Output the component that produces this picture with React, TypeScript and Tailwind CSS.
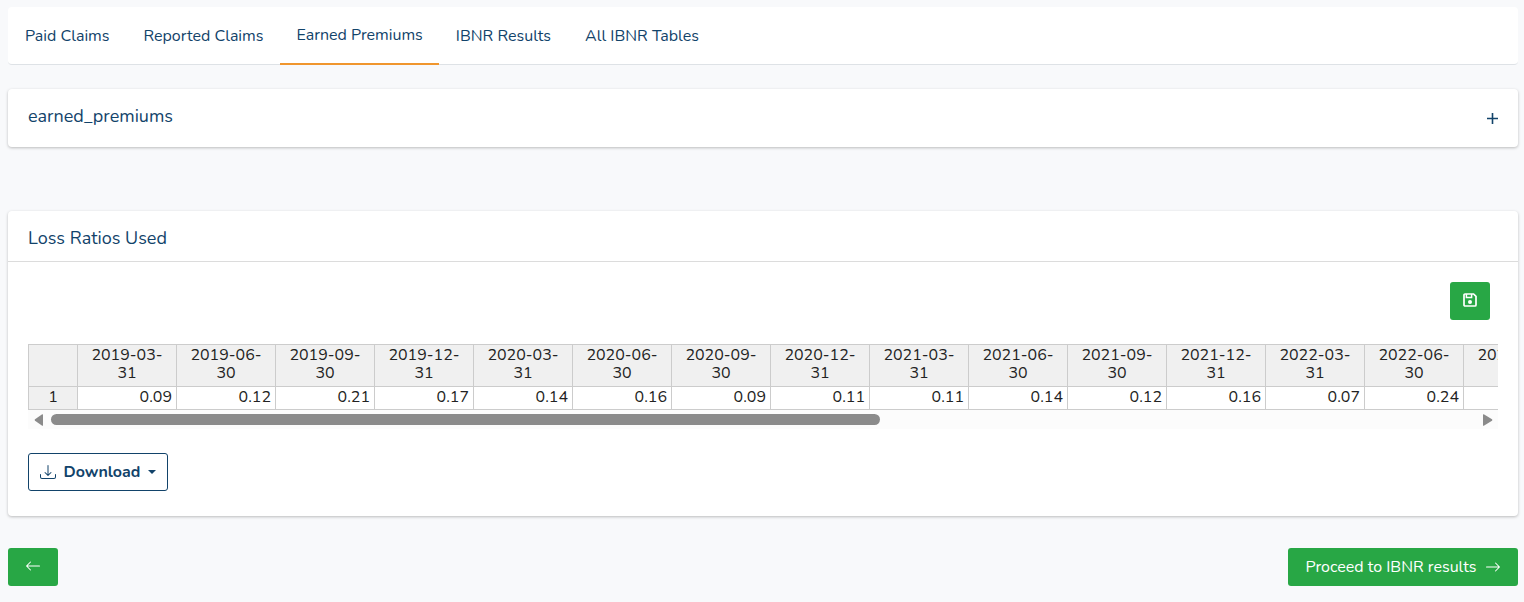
import React from 'react'
import { BsArrowLeft, BsArrowRight, BsDownload } from 'react-icons/bs'

const tabs = ['Paid Claims', 'Reported Claims', 'Earned Premiums', 'IBNR Results', 'All IBNR Tables']

const ratios = [
  { date: '2019-03-31', value: '0.09' },
  { date: '2019-06-30', value: '0.12' },
  { date: '2019-09-30', value: '0.21' },
  { date: '2019-12-31', value: '0.17' },
  { date: '2020-03-31', value: '0.14' },
  { date: '2020-06-30', value: '0.16' },
  { date: '2020-09-30', value: '0.09' },
  { date: '2020-12-31', value: '0.11' },
  { date: '2021-03-31', value: '0.11' },
  { date: '2021-06-30', value: '0.14' },
  { date: '2021-09-30', value: '0.12' },
  { date: '2021-12-31', value: '0.16' },
  { date: '2022-03-31', value: '0.07' },
  { date: '2022-06-30', value: '0.24' },
  { date: '2022-09-30', value: '' },
]

const SaveIcon = () => {
  return (
    <svg width='14' height='14' viewBox='0 0 14 14' fill='none' stroke='white'>
      <path d='M2 1h8.600L13 3.400V12a1 1 0 0 1-1 1H2a1 1 0 0 1-1-1V2a1 1 0 0 1 1-1z' strokeWidth='1.7' />
      <path d='M3.400 1v3.600h5.200V1' strokeWidth='1.5' />
      <circle cx='7' cy='9' r='2' fill='white' stroke='none' />
    </svg>
  )
}

const Tabs = () => {
  return (
    <nav className='flex h-[58px] bg-white border-b border-[#dee2e6] rounded'>
      {tabs.map((tab) => (
        <a
          key={tab}
          href='#'
          className={
            tab === 'Earned Premiums'
              ? 'flex items-center px-4 h-[58px] border-b-2 border-[#f0962e]'
              : 'flex items-center px-[17px] h-[58px]'
          }
        >
          {tab}
        </a>
      ))}
    </nav>
  )
}

const RatioTable = () => {
  return (
    <div className='overflow-hidden'>
      <table className='table-fixed border-separate border-spacing-0 w-[1535px] leading-[18px] text-[#222222]'>
        <thead>
          <tr className='h-[43px]'>
            <th className='w-[50px] bg-[#f0f0f0] border border-[#cccccc]'></th>
            {ratios.map((r) => (
              <th key={r.date} className='w-[99px] px-3 pt-px pb-1 font-normal align-top bg-[#f0f0f0] border-y border-r border-[#cccccc]'>
                {r.date}
              </th>
            ))}
          </tr>
        </thead>
        <tbody>
          <tr className='h-[23px]'>
            <th className='p-0 pt-px font-normal align-top bg-[#f0f0f0] border-x border-b border-[#cccccc]'>1</th>
            {ratios.map((r) => (
              <td key={r.date} className='pt-px px-1 text-right align-top border-r border-b border-[#cccccc]'>
                {r.value}
              </td>
            ))}
          </tr>
        </tbody>
      </table>
      <div className='flex items-center h-[19px] bg-[#fcfcfc]'>
        <button aria-label='Scroll left' className='flex w-[23px] shrink-0 pl-[5px]'>
          <svg width='10' height='12' viewBox='0 0 10 12' fill='#8b8b8b'>
            <path d='M10 .8v10.400q0 .8-.8.6L2 6.800q-.8-.8 0-1.600L9.200.2q.8-.2.8.6z' />
          </svg>
        </button>
        <div className='flex-1'>
          <div className='w-[58.2%] h-[11px] rounded-full bg-[#8b8b8b]'></div>
        </div>
        <button aria-label='Scroll right' className='flex justify-end w-[23px] shrink-0 pr-[5px]'>
          <svg width='10' height='12' viewBox='0 0 10 12' fill='#8b8b8b'>
            <path d='M0 .8v10.400q0 .8.8.6L9 6.800q.8-.8 0-1.600L.8.2Q0 0 0 .8z' />
          </svg>
        </button>
      </div>
    </div>
  )
}

const App = () => {
  return (
    <div className="min-h-screen bg-[#f8f9fb] pt-[7px] pl-2 pr-[6px] pb-4 text-base text-[#12436a] font-['Nunito','Open_Sans',sans-serif]">
      <Tabs />

      <section className='flex items-center justify-between h-[58px] mt-6 px-5 bg-white rounded shadow-[0_1px_3px_rgba(0,0,0,0.25)]'>
        <h2 className='text-[18px] leading-6 pb-1'>earned_premiums</h2>
        <button aria-label='Expand earned_premiums'>
          <svg width='11' height='11' viewBox='0 0 11 11' stroke='#12436a' strokeWidth='1.6'>
            <path d='M5.500 0v11M0 5.500h11' />
          </svg>
        </button>
      </section>

      <section className='mt-16 bg-white rounded shadow-[0_1px_3px_rgba(0,0,0,0.25)]'>
        <div className='flex items-center h-[51px] px-5 pt-1 border-b border-[#dcdcdc]'>
          <h2 className='text-[18px] leading-6'>Loss Ratios Used</h2>
        </div>
        <div className='px-5 pt-5 pb-[25px]'>
          <div className='flex justify-end pr-2 mb-6'>
            <button aria-label='Save' className='flex items-center justify-center w-10 h-[38px] pb-[2px] rounded-[3px] bg-[#28a745]'>
              <SaveIcon />
            </button>
          </div>
          <RatioTable />
          <button className='flex items-center justify-center w-[140px] h-[38px] mt-6 border border-[#12436a] rounded-[3px] font-bold'>
            <BsDownload size={16} className='mr-2' />
            Download
            <span className='ml-2 border-x-4 border-t-4 border-x-transparent border-t-[#12436a]'></span>
          </button>
        </div>
      </section>

      <div className='flex justify-between mt-8 text-white'>
        <button aria-label='Back' className='flex items-center justify-center w-[50px] h-[38px] pb-[2px] rounded-[3px] bg-[#28a745]'>
          <BsArrowLeft size={16} />
        </button>
        <button className='flex items-center justify-center gap-2 w-[230px] h-[38px] rounded-[3px] bg-[#28a745]'>
          Proceed to IBNR results
          <BsArrowRight size={16} />
        </button>
      </div>
    </div>
  )
}

export default App
